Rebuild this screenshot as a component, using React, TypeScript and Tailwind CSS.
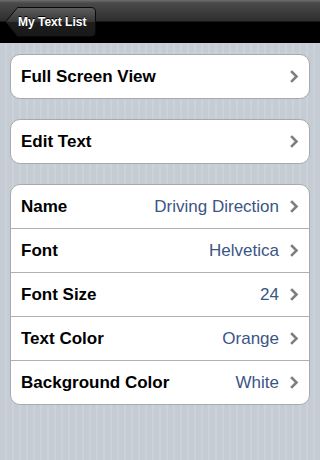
import React from "react";

const Chevron = () => (
  <svg width="9" height="13" viewBox="0 0 9 13" className="shrink-0">
    <polyline points="2,2 6.5,6.5 2,11" fill="none" stroke="#7f7f7f" strokeWidth="2.6" strokeLinecap="square" />
  </svg>
);

type RowProps = { label: string; value?: string; first?: boolean };

const Row = ({ label, value, first }: RowProps) => (
  <div className={`flex items-center pl-[10px] pr-[10px] ${first ? "h-[43px]" : "h-[44px] border-t border-[#b1b1b1]"}`}>
    <span className="flex-1 text-[17px] font-bold text-black">{label}</span>
    {value && <span className="mr-[11px] text-[17px] text-[#3b5585]">{value}</span>}
    <Chevron />
  </div>
);

const Group = ({ children, className = "" }: { children: React.ReactNode; className?: string }) => (
  <div className={`mx-[10px] overflow-hidden rounded-[10px] border border-[#a8abae] bg-white ${className}`}>{children}</div>
);

export default function App() {
  return (
    <div
      className="h-[460px] w-[320px] overflow-hidden bg-[repeating-linear-gradient(90deg,#c5ccd4_0px,#c5ccd4_5px,#cbd2d9_5px,#cbd2d9_7px)]"
      style={{ fontFamily: '"Liberation Sans", Helvetica, Arial, sans-serif' }}
    >
      <div className="flex h-[43px] items-center bg-[linear-gradient(180deg,#6e6e6e_0px,#4a4a4a_3px,#2e2e2e_21px,#000_22px,#000_43px)] pl-[5px]">
        <div className="relative flex h-[30px] w-[91px] items-center">
          <svg className="absolute left-0 top-0" width="91" height="30" viewBox="0 0 91 30">
            <defs>
              <linearGradient id="bb" x1="0" y1="0" x2="0" y2="1">
                <stop offset="0" stopColor="#5e5e5e" />
                <stop offset="0.5" stopColor="#363636" />
                <stop offset="0.51" stopColor="#1e1e1e" />
                <stop offset="1" stopColor="#181818" />
              </linearGradient>
            </defs>
            <path d="M0.5,15 L12.5,0.5 H86 Q90.5,0.5 90.5,5 V25 Q90.5,29.5 86,29.5 H12.5 Z" fill="url(#bb)" stroke="#0a0a0a" strokeWidth="1" />
          </svg>
          <span className="relative pl-[13px] text-[12px] font-bold text-white [text-shadow:0_-1px_0_#000]">My Text List</span>
        </div>
      </div>

      <div className="pt-[11px]">
        <Group>
          <Row label="Full Screen View" first />
        </Group>
        <Group className="mt-[20px]">
          <Row label="Edit Text" first />
        </Group>
        <Group className="mt-[20px]">
          <Row label="Name" value="Driving Direction" first />
          <Row label="Font" value="Helvetica" />
          <Row label="Font Size" value="24" />
          <Row label="Text Color" value="Orange" />
          <Row label="Background Color" value="White" />
        </Group>
      </div>
    </div>
  );
}
